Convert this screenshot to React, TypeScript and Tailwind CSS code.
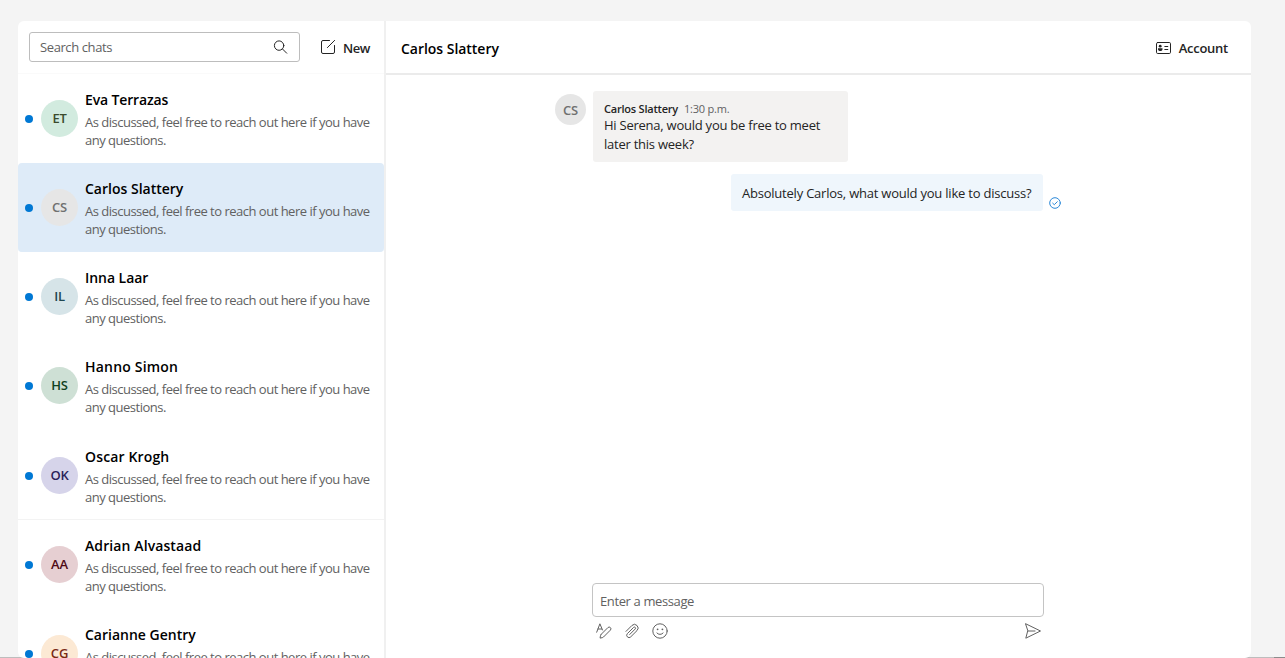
import React from "react";

type Chat = { name: string; initials: string; avatar: string; spacing: string; height: string; selected?: boolean; divider?: boolean };

const chats: Chat[] = [
  { name: "Eva Terrazas", initials: "ET", avatar: "bg-[#d2ebdf] text-[#3b4a2c]", spacing: "tracking-[-0.14px]", height: "h-[89px]" },
  { name: "Carlos Slattery", initials: "CS", avatar: "bg-[#e6e6e6] text-[#707070]", spacing: "tracking-normal", height: "h-[89px]", selected: true },
  { name: "Inna Laar", initials: "IL", avatar: "bg-[#d6e4e8] text-[#1f4650]", spacing: "tracking-[-0.05px]", height: "h-[89px]" },
  { name: "Hanno Simon", initials: "HS", avatar: "bg-[#cee0d5] text-[#11421f]", spacing: "tracking-[0.2px]", height: "h-[90px]" },
  { name: "Oscar Krogh", initials: "OK", avatar: "bg-[#d6d4ea] text-[#2a2359]", spacing: "tracking-[0.15px]", height: "h-[89px]", divider: true },
  { name: "Adrian Alvastaad", initials: "AA", avatar: "bg-[#e6cfd2] text-[#4f0a15]", spacing: "tracking-[0.1px]", height: "h-[89px]" },
  { name: "Carianne Gentry", initials: "CG", avatar: "bg-[#fce9d4] text-[#7a2a14]", spacing: "tracking-normal", height: "h-[89px]" },
];

function ChatRow({ chat }: { chat: Chat }) {
  return (
    <li
      className={`flex shrink-0 items-start border-b pt-4 ${chat.height} ${
        chat.selected ? "rounded bg-[#deebf8] border-[#deebf8]" : chat.divider ? "border-[#f3f3f3]" : "border-transparent"
      }`}
    >
      <span className="mt-[24.500px] ml-[7px] size-2 shrink-0 rounded-full bg-[#0078d4]" />
      <span
        className={`mt-[9.500px] ml-2 flex size-[37px] shrink-0 items-center justify-center rounded-full pt-px text-[13px] font-semibold tracking-[-0.2px] ${chat.avatar}`}
      >
        {chat.initials}
      </span>
      <div className="ml-[7px] whitespace-nowrap">
        <h2 className={`text-[14px] leading-[20px] font-semibold text-black ${chat.spacing}`}>{chat.name}</h2>
        <p className="mt-[3px] text-[13px] leading-[18px] tracking-[-0.5px] text-[#616161]">
          As discussed, feel free to reach out here if you have
          <br />
          any questions.
        </p>
      </div>
    </li>
  );
}

const stroke = { fill: "none", stroke: "currentColor", strokeLinecap: "round", strokeLinejoin: "round" } as const;

function SearchIcon() {
  return (
    <svg className="size-4 text-[#242424]" viewBox="0 0 16 16" {...stroke}>
      <circle cx="6.1" cy="6.6" r="4.7" />
      <path d="M9.600 10.100 13.700 14.200" />
    </svg>
  );
}

function ComposeIcon() {
  return (
    <svg className="size-4 text-[#242424]" viewBox="0 0 16 16" {...stroke}>
      <path d="M9.500 1.500H3a1.500 1.500 0 0 0-1.500 1.500v10A1.500 1.500 0 0 0 3 14.500h10a1.500 1.500 0 0 0 1.500-1.500V6.500M7.400 8.600 14.600 1.400" />
    </svg>
  );
}

function AccountIcon() {
  return (
    <svg className="h-3 w-[15px] text-[#242424]" viewBox="0 0 15 12" {...stroke}>
      <rect x=".5" y=".5" width="14" height="11" rx="1.2" />
      <circle cx="4.200" cy="4.200" r="1.400" fill="currentColor" stroke="none" />
      <path d="M2 6.200h4.500v1c0 1-1 1.800-2.250 1.800S2 8.200 2 7.200z" fill="currentColor" stroke="none" />
      <path d="M8.800 4.500h3M8.800 7.500h3" />
    </svg>
  );
}

function FormatIcon() {
  return (
    <svg className="size-4" viewBox="0 0 16 16" {...stroke}>
      <path d="M.7 9.200 3.900.8 6.500 7M2 6h3.700" />
      <path d="m5 11.500 6.900-6.900a1.750 1.750 0 0 1 2.500 2.500l-6.900 6.900c-.4.4-.9.600-1.400.7l-2 .400.300-2c.1-.500.300-.900.600-1.200z" />
    </svg>
  );
}

function ClipIcon() {
  return (
    <svg className="size-4" viewBox="0 0 16 16" {...stroke}>
      <path d="m2 8.400 5.900-5.900a3.600 3.600 0 0 1 5.100 5.100l-6.300 6.300a2.300 2.300 0 0 1-3.300-3.300l6.200-6.200a1.100 1.100 0 0 1 1.600 1.600L5.700 11.500" />
    </svg>
  );
}

function SmileIcon() {
  return (
    <svg className="size-4" viewBox="0 0 16 16" {...stroke}>
      <circle cx="8" cy="8" r="7.200" />
      <path d="M4.900 10a3.900 3.900 0 0 0 6.200 0" />
      <circle cx="5.600" cy="6.300" r=".9" fill="currentColor" stroke="none" />
      <circle cx="10.400" cy="6.300" r=".9" fill="currentColor" stroke="none" />
    </svg>
  );
}

function SendIcon() {
  return (
    <svg className="size-4" viewBox="0 0 16 16" {...stroke}>
      <path d="M.8.8 15.500 8 .8 15.200 2.700 8zM2.700 8h7.300" />
    </svg>
  );
}

function DeliveredIcon() {
  return (
    <svg className="mb-[2px] ml-[5.500px] size-3 text-[#2b88d8]" viewBox="0 0 12 12" {...stroke}>
      <circle cx="6" cy="6" r="5.300" />
      <path d="m3.700 6.200 1.600 1.500 3-3" />
    </svg>
  );
}

export default function App() {
  return (
    <div className="relative h-[658px] w-[1285px] overflow-hidden bg-[#f4f4f4] pt-[21px] pl-[18px] font-['Open_Sans','Noto_Sans',sans-serif]">
      <div className="absolute bottom-0 left-0 h-px w-6 bg-[#bdbdbd]" />
      <div className="absolute right-0 bottom-0 h-px w-10 bg-[#bdbdbd]" />
      <div className="absolute right-0 bottom-0 h-px w-[11px] bg-[#8c8c8c]" />
      <div className="relative flex h-[637px] w-[1233px] overflow-hidden rounded-[6px] bg-white">
        <aside className="flex w-[368px] shrink-0 flex-col border-r-2 border-[#f0f0f0]">
          <div className="flex h-[53px] shrink-0 items-center border-b border-[#fafafa] pl-[11px]">
            <div className="flex h-[30px] w-[271px] items-center justify-between rounded-[3px] border border-[#bdbdbd] pr-[10px] pl-[10px]">
              <span className="pt-[2px] text-[13px] tracking-[-0.4px] text-[#616161]">Search chats</span>
              <SearchIcon />
            </div>
            <button className="ml-5 flex items-center gap-[7px] text-[13px] font-semibold tracking-[-0.4px] text-[#242424]">
              <ComposeIcon />
              <span className="pt-[3px]">New</span>
            </button>
          </div>
          <ul className="flex min-h-0 flex-1 flex-col overflow-hidden">
            {chats.map((chat) => (
              <ChatRow key={chat.name} chat={chat} />
            ))}
          </ul>
        </aside>
        <main className="flex flex-1 flex-col">
          <header className="flex h-[54px] shrink-0 items-center justify-between border-b-2 border-[#ebebeb] pr-[23px] pl-[15px]">
            <h1 className="pt-[2px] text-[14px] font-semibold tracking-[-0.030px] text-black">Carlos Slattery</h1>
            <button className="flex items-center gap-2 pt-px text-[13px] font-semibold tracking-[-0.250px] text-[#242424]">
              <AccountIcon />
              <span className="pt-[2px]">Account</span>
            </button>
          </header>
          <section className="flex-1 pt-4 pl-[169px]">
            <div className="flex items-start">
              <span className="mt-[3px] flex size-[31px] items-center justify-center rounded-full bg-[#e6e6e6] pt-[2px] text-[13px] font-semibold tracking-[-0.200px] text-[#707070]">
                CS
              </span>
              <div className="ml-[7px] h-[71px] w-[255px] rounded-[3px] bg-[#f3f2f1] pt-[10px] pl-[11px] whitespace-nowrap">
                <div className="flex gap-[6px] text-[11px] leading-[15px]">
                  <span className="font-semibold tracking-[-0.220px] text-[#242424]">Carlos Slattery</span>
                  <span className="tracking-[-0.220px] text-[#616161]">1:30 p.m.</span>
                </div>
                <p className="text-[13px] leading-[19px] tracking-[-0.240px] text-[#242424]">
                  Hi Serena, would you be free to meet
                  <br />
                  later this week?
                </p>
              </div>
            </div>
            <div className="mt-[11.5px] flex items-end pl-[176px]">
              <p className="flex h-[37.5px] w-[312px] items-center rounded-[3px] bg-[#eff6fc] pt-[2px] pl-[11px] text-[13px] tracking-[-0.220px] whitespace-nowrap text-[#242424]">
                Absolutely Carlos, what would you like to discuss?
              </p>
              <DeliveredIcon />
            </div>
          </section>
          <footer className="ml-[206px] h-[75px] w-[452px] shrink-0">
            <div className="flex h-[34px] items-center rounded-[4px] border border-[#c4c4c4] pt-[3px] pl-[7px] text-[13px] tracking-[-0.380px] text-[#616161]">
              Enter a message
            </div>
            <div className="mt-[5.500px] flex items-center pr-[3px] pl-1 text-[#616161]">
              <FormatIcon />
              <span className="ml-3 flex">
                <ClipIcon />
              </span>
              <span className="ml-3 flex">
                <SmileIcon />
              </span>
              <span className="ml-auto flex">
                <SendIcon />
              </span>
            </div>
          </footer>
        </main>
      </div>
    </div>
  );
}
